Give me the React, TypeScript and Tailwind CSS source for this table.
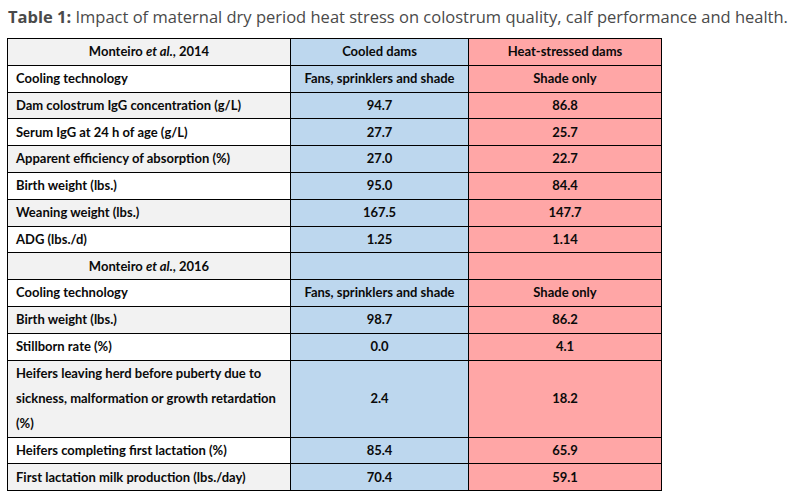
import type { ReactNode } from "react";

const rows2014: [string, string, string][] = [
  ["Cooling technology", "Fans, sprinklers and shade", "Shade only"],
  ["Dam colostrum IgG concentration (g/L)", "94.7", "86.8"],
  ["Serum IgG at 24 h of age (g/L)", "27.7", "25.7"],
  ["Apparent efficiency of absorption (%)", "27.0", "22.7"],
  ["Birth weight (lbs.)", "95.0", "84.4"],
  ["Weaning weight (lbs.)", "167.5", "147.7"],
  ["ADG (lbs./d)", "1.25", "1.14"],
];

const rows2016: [ReactNode, string, string][] = [
  ["Cooling technology", "Fans, sprinklers and shade", "Shade only"],
  ["Birth weight (lbs.)", "98.7", "86.2"],
  ["Stillborn rate (%)", "0.0", "4.1"],
  [
    <>
      Heifers leaving herd before puberty due to
      <br />
      sickness, malformation or growth retardation
      <br />
      (%)
    </>,
    "2.4",
    "18.2",
  ],
  ["Heifers completing first lactation (%)", "85.4", "65.9"],
  ["First lactation milk production (lbs./day)", "70.4", "59.1"],
];

const cell = "border border-black";
const blue = "bg-[#bdd7ee] text-center";
const pink = "bg-[#ffa6a6] text-center";

function Row({ label, a, b, gray }: { label: ReactNode; a: string; b: string; gray: boolean }) {
  const tall = typeof label !== "string";
  return (
    <tr className={tall ? "h-[77px]" : "h-[26.8px]"}>
      <td
        className={`${cell} whitespace-nowrap pl-2 ${tall ? "leading-[25px]" : ""} ${gray ? "bg-[#f2f2f2]" : "bg-white"}`}
      >
        {label}
      </td>
      <td className={`${cell} ${blue}`}>{a}</td>
      <td className={`${cell} ${pink}`}>{b}</td>
    </tr>
  );
}

function SourceRow({ year, a, b }: { year: string; a: string; b: string }) {
  return (
    <tr className="h-[26.8px]">
      <td className={`${cell} bg-[#f2f2f2] text-center`}>
        Monteiro <i>et al.</i>, {year}
      </td>
      <td className={`${cell} ${blue}`}>{a}</td>
      <td className={`${cell} ${pink}`}>{b}</td>
    </tr>
  );
}

export default function App() {
  return (
    <div className="min-h-[498px] w-[801px] bg-white">
      <p
        className="pl-2 pt-[7px] text-[16.5px] leading-5 text-[#4a4a4a]"
        style={{ fontFamily: '"Open Sans", Lato, sans-serif' }}
      >
        <b className="font-bold">Table 1:</b> Impact of maternal dry period heat stress on colostrum quality, calf
        performance and health.
      </p>

      <table
        className="ml-[7px] mt-[11px] w-[654px] table-fixed border-collapse text-[13px] font-bold text-[#0a0a0a]"
        style={{ fontFamily: 'Lato, "Noto Sans", sans-serif' }}
      >
        <colgroup>
          <col className="w-[283px]" />
          <col className="w-[178px]" />
          <col className="w-[193px]" />
        </colgroup>
        <tbody>
          <SourceRow year="2014" a="Cooled dams" b="Heat-stressed dams" />
          {rows2014.map(([l, a, b], i) => (
            <Row key={i} label={l} a={a} b={b} gray={i % 2 === 1} />
          ))}
          <SourceRow year="2016" a="" b="" />
          {rows2016.map(([l, a, b], i) => (
            <Row key={i} label={l} a={a} b={b} gray={i % 2 === 1} />
          ))}
        </tbody>
      </table>
    </div>
  );
}
